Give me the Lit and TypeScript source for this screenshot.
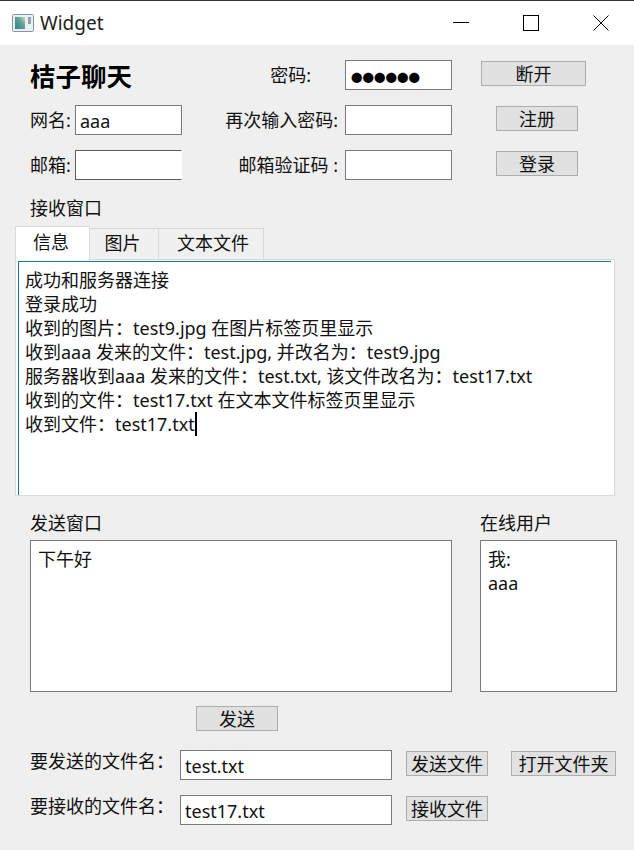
import { LitElement, html, css } from "lit";
import { customElement } from "lit/decorators.js";

@customElement("app-root")
export class AppRoot extends LitElement {
  static styles = css`
    :host {
      display: block;
      width: 634px;
      height: 850px;
      overflow: hidden;
      background: #efefef;
      color: #111;
      font: 18px/24px "Noto Sans", "Noto Sans CJK SC", sans-serif;
    }
    * { box-sizing: border-box; }
    .titlebar {
      height: 45px;
      background: #fff;
      border-top: 1px solid #333;
      display: flex;
      align-items: center;
      padding-left: 12px;
    }
    .app-icon { width: 22px; height: 18px; margin-right: 6px; }
    .win-title { flex: 1; font-size: 19px; color: #222; }
    .win-btn { width: 70px; height: 44px; display: flex; align-items: center; justify-content: center; }
    .win-btn svg { width: 16px; height: 16px; display: block; }
    .win-btns { display: flex; margin-right: -2px; }
    .form {
      display: grid;
      grid-template-columns: 45px 107px 163px 107px 1fr;
      grid-auto-rows: 45px;
      padding: 15px 0 0 30px;
    }
    .cell { height: 30px; display: flex; align-items: center; white-space: nowrap; }
    .title { grid-column: 1 / 3; font-size: 25.5px; font-weight: 700; color: #000; padding-top: 1px; }
    .right { justify-content: flex-end; padding-right: 7px; }
    .pw-label { padding-right: 34px; }
    .input {
      background: #fff;
      border: 1px solid #7a7a7a;
      height: 30px;
      padding: 0 4px;
      display: flex;
      align-items: center;
      white-space: nowrap;
      padding-top: 2px;
    }
    .input.dots { font-size: 11.5px; color: #000; padding-left: 5px; padding-top: 6px; }
    .input.clipped { border-color: #5c5c5c; border-right-color: #fff; }
    .btn {
      height: 25px;
      background: #e1e1e1;
      border: 1px solid #adadad;
      display: flex;
      align-items: center;
      justify-content: center;
      white-space: nowrap;
      font-size: 18px;
      margin-top: 1px;
    }
    .btn-col { display: flex; justify-content: flex-start; }
    .w105 { width: 105px; }
    .w82 { width: 82px; }
    .ml29 { margin-left: 29px; }
    .ml44 { margin-left: 44px; }
    .caption { padding-left: 30px; height: 26px; margin-top: 1px; }
    .tabs { display: flex; margin: 4px 0 0 15px; height: 33px; align-items: flex-end; position: relative; z-index: 1; }
    .tab {
      height: 31px;
      background: #f0f0f0;
      border: 1px solid #d9d9d9;
      border-left: none;
      border-bottom: none;
      display: flex;
      align-items: center;
      justify-content: center;
      padding: 0 3px 2px 0;
    }
    .tab.active { height: 34px; margin-bottom: -1px; background: #fff; border-left: 1px solid #d9d9d9; padding: 0 3px 4px 0; }
    .tab.text { padding: 0 0 2px 4px; }
    .pane {
      margin-left: 15px;
      width: 600px;
      height: 237px;
      background: #fff;
      border: 1px solid #d9d9d9;
      padding: 1px 3px 0 2px;
    }
    .log {
      height: 100%;
      border-top: 1px solid #1979a9;
      border-left: 1px solid #1979a9;
      padding: 6px 6px;
      white-space: nowrap;
    }
    .caret { display: inline-block; width: 2px; height: 24px; background: #000; vertical-align: top; }
    .send-head { display: flex; padding: 15px 0 5px 30px; height: 44px; align-items: flex-end; }
    .send-head span:first-child { width: 450px; }
    .send-boxes { display: flex; padding-left: 30px; }
    .box { background: #fff; border: 1px solid #7a7a7a; height: 152px; padding: 6px 7px; }
    .box.main { width: 422px; margin-right: 28px; }
    .box.users { width: 137px; }
    .send-row { padding: 14px 0 0 196px; height: 58px; }
    .send-row .btn { margin-top: 0; }
    .file-row { display: flex; padding-left: 30px; height: 45px; }
    .file-label { width: 150px; height: 30px; display: flex; align-items: center; white-space: nowrap; margin-top: -4px; }
    .file-input { width: 212px; }
    .file-row .btn { margin-left: 14px; }
    .file-row .open { margin-left: 23px; }
  `;

  render() {
    return html`
      <div class="titlebar">
        <svg class="app-icon" viewBox="0 0 22 18">
          <defs>
            <linearGradient id="g" x1="0" y1="1" x2="1" y2="0">
              <stop offset="0" stop-color="#2f7f9f" />
              <stop offset="0.6" stop-color="#5fa58a" />
              <stop offset="1" stop-color="#c8dcc8" />
            </linearGradient>
          </defs>
          <rect x="0.5" y="0.5" width="21" height="17" rx="1" fill="#e8eef2" stroke="#8a949c" />
          <rect x="3" y="3" width="10" height="12" fill="url(#g)" />
          <rect x="16" y="3" width="3" height="7" fill="#8fa3ad" />
        </svg>
        <span class="win-title">Widget</span>
        <div class="win-btns">
          <div class="win-btn"><svg viewBox="0 0 16 16"><path d="M0 7.5H16" stroke="#000" fill="none" /></svg></div>
          <div class="win-btn"><svg viewBox="0 0 16 16"><rect x="0.5" y="0.5" width="15" height="15" stroke="#000" fill="none" /></svg></div>
          <div class="win-btn"><svg viewBox="0 0 16 16"><path d="M0.5 0.5L15.5 15.5M15.5 0.5L0.5 15.5" stroke="#000" fill="none" /></svg></div>
        </div>
      </div>

      <div class="form">
        <div class="cell title">桔子聊天</div>
        <div class="cell right pw-label">密码:</div>
        <div class="input dots">●●●●●●</div>
        <div class="btn-col"><div class="btn w105 ml29">断开</div></div>

        <div class="cell">网名:</div>
        <div class="input">aaa</div>
        <div class="cell right">再次输入密码:</div>
        <div class="input"></div>
        <div class="btn-col"><div class="btn w82 ml44">注册</div></div>

        <div class="cell">邮箱:</div>
        <div class="input clipped"></div>
        <div class="cell right">邮箱验证码 :</div>
        <div class="input"></div>
        <div class="btn-col"><div class="btn w82 ml44">登录</div></div>
      </div>

      <div class="caption">接收窗口</div>
      <div class="tabs">
        <div class="tab active" style="width:75px">信息</div>
        <div class="tab" style="width:69px">图片</div>
        <div class="tab text" style="width:105px">文本文件</div>
      </div>
      <div class="pane">
        <div class="log">
          成功和服务器连接<br />
          登录成功<br />
          收到的图片：test9.jpg 在图片标签页里显示<br />
          收到aaa 发来的文件：test.jpg, 并改名为：test9.jpg<br />
          服务器收到aaa 发来的文件：test.txt, 该文件改名为：test17.txt<br />
          收到的文件：test17.txt 在文本文件标签页里显示<br />
          收到文件：test17.txt<span class="caret"></span>
        </div>
      </div>

      <div class="send-head"><span>发送窗口</span><span>在线用户</span></div>
      <div class="send-boxes">
        <div class="box main">下午好</div>
        <div class="box users">我:<br />aaa</div>
      </div>
      <div class="send-row"><div class="btn w82">发送</div></div>

      <div class="file-row">
        <div class="file-label">要发送的文件名：</div>
        <div class="input file-input">test.txt</div>
        <div class="btn w82">发送文件</div>
        <div class="btn w105 open">打开文件夹</div>
      </div>
      <div class="file-row">
        <div class="file-label">要接收的文件名：</div>
        <div class="input file-input">test17.txt</div>
        <div class="btn w82">接收文件</div>
      </div>
    `;
  }
}
